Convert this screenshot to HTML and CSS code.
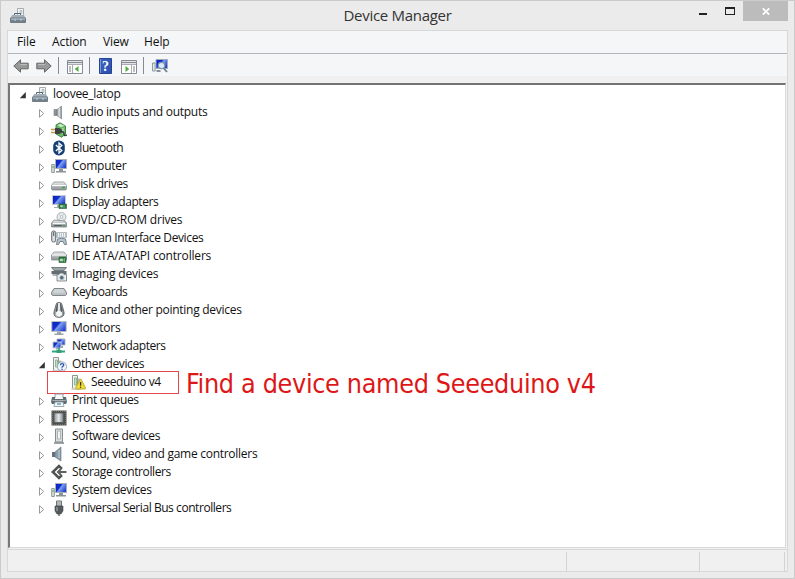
FILE: index.html
```
<!DOCTYPE html>
<html lang="en">
<head>
<meta charset="utf-8">
<title>Device Manager</title>
<link rel="stylesheet" href="styles.css">
</head>
<body>
<svg class="defs" aria-hidden="true">
  <defs>
    <linearGradient id="steel" x2="0" y2="1"><stop stop-color="#eceeee"/><stop offset="1" stop-color="#858b8e"/></linearGradient>
    <linearGradient id="silver"><stop stop-color="#8b9194"/><stop offset=".5" stop-color="#e6eaeb"/><stop offset="1" stop-color="#747b80"/></linearGradient>
    <linearGradient id="screen" x2="1" y2=".6"><stop stop-color="#0a1fb4"/><stop offset=".45" stop-color="#1230cf"/><stop offset=".55" stop-color="#7f9ff0"/><stop offset="1" stop-color="#2443d0"/></linearGradient>
    <linearGradient id="helpblue" x2="1" y2="1"><stop stop-color="#3d62c0"/><stop offset="1" stop-color="#2c4fae"/></linearGradient>
    <symbol id="computer-root" viewBox="0 0 16 16"><path d="M7.500 8V1.500h6V8" fill="#f2f5f6" stroke="#a5adb0"/><path d="M10 3.500h2v3h-2z" fill="#d5dee2" stroke="#9aa8b0" stroke-width=".6"/><path d="M4.500 9V6.500h6V9" fill="none" stroke="#59656e"/><path d="M2 8h12l1.500 3H.5z" fill="#a3afb8"/><path d="M.5 11h15v4.500H.5z" fill="#71808c" stroke="#55616b" stroke-width=".7"/><path d="M1 12h14M5 12v2m6-2v2" stroke="#c7d3db"/></symbol>
    <symbol id="speaker" viewBox="0 0 16 16"><path d="M3 5.500h3v6H3z" fill="#8e9498" stroke="#767b80" stroke-width=".6"/><path d="M6 5.500 10.500 2v13L6 11.500z" fill="url(#silver)" stroke="#6d7479" stroke-width=".5"/></symbol>
    <symbol id="speaker-blue" viewBox="0 0 16 16"><path d="M1 6h3v5H1z" fill="#64727e"/><path d="M4 6 10 1v14l-6-4z" fill="#8b9caa" stroke="#5f6f7d" stroke-width=".6"/><path d="M8 4v8" stroke="#c8d4dc"/></symbol>
    <symbol id="battery" viewBox="0 0 16 16"><path d="M5 3 9 .8 14.500 4v8l-4 3.300L5 12z" fill="#6bb965" stroke="#2d7136" stroke-width=".8"/><path d="m6.500 3 3 2 4-1-4-2z" fill="#d3efcf"/><path d="M12 6v6" stroke="#a5dba0" stroke-width="1.500"/><path d="M0 7.500h5M0 10.500h5" stroke="#bf9b40" stroke-width="1.300"/><path d="M4 6h3q4 0 4 3t-4 3H4z" fill="#3c4143"/><path d="M10 9.500q3 0 3 2.500t3 1" fill="none" stroke="#363c3b" stroke-width="1.400"/></symbol>
    <symbol id="bluetooth" viewBox="0 0 16 16"><rect x="2.200" y=".5" width="11.600" height="15" rx="5.600" fill="#153d75"/><path d="m4.800 5 6 5.600L8 13V3l2.800 2.400-6 5.600" fill="none" stroke="#fff" stroke-width="1.300"/></symbol>
    <symbol id="computer" viewBox="0 0 16 16"><path d="M.7 6.500h2.600v8H.7z" fill="#dce2df" stroke="#8d9a91"/><path d="M1 9h2" stroke="#59a35b"/><path d="M4.500 1.500h11v9h-11z" fill="url(#screen)" stroke="#a7afb9"/><path d="M8 11h4v2H8zM5 13h10v1.500H5z" fill="#8b9298"/></symbol>
    <symbol id="disk" viewBox="0 0 16 16"><path d="m3 6-2.500 3.500V13q0 1 1.500 1h12q1.500 0 1.500-1V9.500L13 6z" fill="url(#steel)" stroke="#8b9092" stroke-width=".8"/><path d="M1 9.500h14" stroke="#fff"/><path d="M11 11.500h3" stroke="#39aa42" stroke-width="1.400"/></symbol>
    <symbol id="display" viewBox="0 0 16 16"><path d="M1.500 1.500h13v9h-13z" fill="url(#screen)" stroke="#c5cbd2"/><path d="M6 11h4v2H6zM3 13h7v1H3z" fill="#a7adb2"/><path d="M8 10h7.500v4.500H8z" fill="#2e7940" stroke="#215b30" stroke-width=".6"/><path d="M9.500 11.500h2v1.500h-2zM13 11v3" fill="#b9dfc0" stroke="#a9d3b1" stroke-width=".6"/></symbol>
    <symbol id="dvd" viewBox="0 0 16 16"><circle cx="10.500" cy="5" r="4.500" fill="#e8edef" stroke="#9aa3a6" stroke-width=".8"/><path d="m8 2 5 6m0-6L8 8" stroke="#b2bcc0" stroke-width=".7"/><circle cx="10.500" cy="5" r="1.300" fill="#fff" stroke="#8e999f" stroke-width=".5"/><path d="m3 8-2.500 3v4h15v-4L14 9z" fill="url(#steel)" stroke="#7e8588" stroke-width=".8"/><path d="M2 11.500h12" stroke="#f7f8f8"/><path d="M3 13.500h8" stroke="#555c5f"/><path d="M12 13.500h2" stroke="#319f3c"/></symbol>
    <symbol id="hid" viewBox="0 0 16 16"><rect x=".7" y="1" width="4" height="11" rx="1.800" fill="#dadfe1" stroke="#62696d"/><path d="M2.700 2v4" stroke="#4d555a"/><path d="M5.500 2.500h10v5h-10z" fill="#eef1f3" stroke="#9aa4aa" stroke-width=".7"/><path d="M6 4h9M6 6h9" stroke="#8e9aa2" stroke-dasharray="1 1"/><path d="m5.500 14.500 1-5.500q4-1.500 8 0l1 5.500h-2l-1.500-3H9l-1.500 3z" fill="#b9c5ce" stroke="#596a78" stroke-width=".8"/></symbol>
    <symbol id="ide" viewBox="0 0 16 16"><path d="M3 4 .5 7v5h15V7L13 4z" fill="url(#steel)" stroke="#898f92" stroke-width=".8"/><path d="M1 7h14" stroke="#fff"/><path d="M8 9h7v5.500H8z" fill="#2f7941" stroke="#235b30" stroke-width=".6"/><path d="M9 11h3v2H9zM13.500 10v4" fill="#bce0c2" stroke="#9bcda4" stroke-width=".6"/></symbol>
    <symbol id="imaging" viewBox="0 0 16 16"><path d="M.5 1.500h15L13 4.500H3z" fill="#9ba6aa" stroke="#515b60" stroke-width=".7"/><path d="M.5 5h15v3H.5z" fill="#636e73"/><path d="M1 8h6v2H2z" fill="#aeb5b7"/><path d="M6 8.500h2l1-1.500h3l1 1.500h2.500v6.500H6z" fill="#eceeee" stroke="#6b7376" stroke-width=".8"/><circle cx="10.800" cy="11.700" r="2.200" fill="#526876" stroke="#bfcdd4"/></symbol>
    <symbol id="keyboard" viewBox="0 0 16 16"><path d="m3 4.500-2.500 4v2l1 1h13l1-1v-2l-2.500-4z" fill="#bcc1c4" stroke="#697074" stroke-width=".8"/><path d="M3.500 6h9M2.500 8h11" stroke="#f6f7f7" stroke-dasharray="1.200 .5"/></symbol>
    <symbol id="mouse" viewBox="0 0 16 16"><path d="M5.500 1.200Q8-.4 10.500 1.200L13 10q1 5-5 5.500Q2 15 3 10z" fill="url(#silver)" stroke="#55595d" stroke-width=".8"/><path d="M6 1.500 4.500 9q1 2 2 0L7 1.500zM10 1.500 11.500 9q-1 2-2 0L9 1.500z" fill="#51565a"/><path d="M8 2v5" stroke="#e8eaeb" stroke-width="1.500"/><ellipse cx="8" cy="11.500" rx="3" ry="2.500" fill="#f5f6f6"/></symbol>
    <symbol id="monitor" viewBox="0 0 16 16"><path d="M.8 1.500h14.400v10H.8z" fill="url(#screen)" stroke="#b8bdc5"/><path d="M6 12h4v2H6zM3.500 13.500h9V15h-9z" fill="#9ba2aa"/></symbol>
    <symbol id="network" viewBox="0 0 16 16"><path d="M6 1h8v6H6z" fill="url(#screen)" stroke="#acb5be"/><path d="M2 4h8v6H2z" fill="url(#screen)" stroke="#bac3ca"/><path d="M5 10h3v1.500H5zM9 8h3v2H9z" fill="#9da9b1"/><path d="M1 13.500h13M8 10v5" stroke="#35a584" stroke-width="1.800"/><path d="M5.500 12h5v3h-5z" fill="#389d70"/></symbol>
    <symbol id="tower" viewBox="0 0 16 16"><path d="M4.500 1h7v13h-7z" fill="#d9dddd" stroke="#858d8f"/><path d="M6.500 3h3v8h-3z" fill="#f4f5f5" stroke="#9ea5a7" stroke-width=".8"/><path d="M3 15h10" stroke="#7e8789" stroke-width="1.500"/></symbol>
    <symbol id="device-card" viewBox="0 0 16 16"><path d="M2.500 14V1.500h5V14" fill="#eef1ee" stroke="#8b9790"/><path d="M4.500 4h2v7h-2z" fill="#c8dec9" stroke="#83ab87" stroke-width=".8"/><path d="M8 5h2v9H8z" fill="#d7dbd9" stroke="#98a09b" stroke-width=".7"/><path d="M1.500 15h9" stroke="#9ba39d"/></symbol>
    <symbol id="unknown" viewBox="0 0 16 16"><use href="#device-card"/><circle cx="11" cy="10.500" r="4.600" fill="#edf4fa" stroke="#8b9bad" stroke-width=".8"/><path d="M9.400 9.300q0-1.600 1.700-1.600t1.700 1.400q0 .8-1 1.300t-.7 1.300" fill="none" stroke="#2355a5" stroke-width="1.200"/><circle cx="11" cy="13.200" r=".75" fill="#2355a5"/></symbol>
    <symbol id="warning" viewBox="0 0 16 16"><use href="#device-card"/><path d="M10 5.500q.6-.8 1.200 0l4.300 8.300q.3 1-.6 1.200H6.200q-.9-.2-.6-1.200z" fill="#f1dc35" stroke="#b29a20" stroke-width=".8"/><path d="M10.600 8v3.700" stroke="#39351c" stroke-width="1.300"/><circle cx="10.600" cy="13.200" r=".7" fill="#39351c"/></symbol>
    <symbol id="printer" viewBox="0 0 16 16"><path d="M4 6V2h8v4" fill="#f8fafb" stroke="#929a9e"/><path d="m1 5-1 5 1 2h14l1-2-1-5h-3v2H4V5z" fill="#606c73"/><path d="M1.500 8.500h13" stroke="#a8b2b6"/><path d="M4 10h8l1 4.500H3z" fill="#f6f8f9" stroke="#8a969c" stroke-width=".8"/><path d="M6 11h4v2H6z" fill="#82b6c2"/></symbol>
    <symbol id="processor" viewBox="0 0 16 16"><path d="M.5.5h15v15H.5z" fill="#4e514c"/><path d="M1 1.500h14M1 14.500h14M1.500 1v14M14.500 1v14" stroke="#77766b" stroke-width="1" stroke-dasharray="1 1"/><path d="M3 3h9.500v9.500H3z" fill="url(#silver)" stroke="#55595a" stroke-width=".8"/></symbol>
    <symbol id="storage" viewBox="0 0 16 16"><path d="M11 4.800 8 2 1.800 8 8 14l3-2.800" fill="none" stroke="#505253" stroke-width="2.500"/><path d="M7 8h8.500M10 5 7 8l3 3" fill="none" stroke="#5d5f60" stroke-width="2"/></symbol>
    <symbol id="usb" viewBox="0 0 16 16"><path d="M5.500 1h5v5h-5z" fill="#d0d4d5" stroke="#6c7375"/><path d="M7 2v3m2-3v3" stroke="#7c8589" stroke-width=".7"/><path d="M4 6h8v5l-2 3H6l-2-3z" fill="#535a5e" stroke="#41484b" stroke-width=".6"/><path d="M6 7v4" stroke="#aeb5b7"/><path d="M8 14v2" stroke="#60686b" stroke-width="1.500"/></symbol>
    <symbol id="scan" viewBox="0 0 16 16"><path d="M.6 5h2.500v8H.6z" fill="#edf1f3" stroke="#889198"/><path d="M4 1.500h11.500v9H4z" fill="url(#screen)" stroke="#9facbb"/><path d="M4.500 13h4" stroke="#84919b" stroke-width="2"/><circle cx="9.500" cy="7.500" r="3.200" fill="#d9eafa" stroke="#8197a7" stroke-width="1.200"/><path d="m11.500 10 3.500 4" stroke="#68818f" stroke-width="1.800"/></symbol>
    <symbol id="closed" viewBox="0 0 8 9"><path d="M1.500.7v7.600L5.700 4.500z" fill="#fff" stroke="#999"/></symbol>
    <symbol id="opened" viewBox="0 0 8 9"><path d="M6.800 1v6.300H.8z" fill="#333"/></symbol>
  </defs>
</svg>
<main class="window">
  <header class="titlebar">
    <svg class="app-icon"><use href="#computer-root"/></svg>
    <h1>Device Manager</h1>
    <div class="controls">
      <svg class="min" viewBox="0 0 8 2"><path d="M0 0h8v2H0z"/></svg>
      <svg class="max" viewBox="0 0 10 8"><path d="M0 0h10v8H0zM1 2v5h8V2z" fill-rule="evenodd"/></svg>
      <span class="close"><svg viewBox="0 0 8 7"><path d="m.8.3 6.400 6.400m0-6.400L.8 6.700"/></svg></span>
    </div>
  </header>
  <div class="client">
    <nav class="menu"><span class="m-file">File</span><span class="m-action">Action</span><span class="m-view">View</span><span>Help</span></nav>
    <div class="toolbar">
      <svg class="nav-arrow" viewBox="0 0 16 14"><path d="M.8 7 7.500.8v3.400h7.700v5.600H7.500v3.400z"/><path class="shine" d="M7 5.500h7"/></svg>
      <svg class="nav-arrow forward" viewBox="0 0 16 14"><path d="M15.200 7 8.500.8v3.400H.8v5.600h7.700v3.400z"/><path class="shine" d="M2 5.500h7"/></svg>
      <i class="sep s1"></i>
      <svg class="pane" viewBox="0 0 16 14"><path d="M.5.500h15v13H.5z" fill="#fff" stroke="#858b91"/><path d="M1 2.500h14" stroke="#848b94" stroke-width="1.500"/><path d="M1 4.500h14M5.500 5v8" stroke="#a7adb3"/><path d="M2 7h2M2 9h2M2 11h2" stroke="#777f86"/><path d="M11.500 6v6L7.700 9z" fill="#50ad3c"/></svg>
      <i class="sep s2"></i>
      <svg class="help" viewBox="0 0 13 16"><path d="M.5.500h12v15H.5z" fill="url(#helpblue)" stroke="#244496"/><path d="M1.500 1v14" stroke="#8198d5"/><text x="3" y="13">?</text></svg>
      <svg class="pane action-pane" viewBox="0 0 16 14"><path d="M.5.500h15v13H.5z" fill="#fff" stroke="#858b91"/><path d="M1 2.500h14" stroke="#848b94" stroke-width="1.500"/><path d="M1 4.500h14M10.500 5v8" stroke="#a7adb3"/><path d="M12 7h2M12 9h2M12 11h2" stroke="#777f86"/><path d="M4.500 6v6l3.800-3z" fill="#50ad3c"/></svg>
      <i class="sep s3"></i>
      <svg class="scan"><use href="#scan"/></svg>
    </div>
    <section class="tree-frame">
      <ul class="tree">
        <li class="root"><svg class="twist"><use href="#opened"/></svg><svg class="icon"><use href="#computer-root"/></svg><span class="snug">loovee_latop</span></li>
        <li><svg class="twist"><use href="#closed"/></svg><svg class="icon"><use href="#speaker"/></svg><span class="snug">Audio inputs and outputs</span></li>
        <li><svg class="twist"><use href="#closed"/></svg><svg class="icon"><use href="#battery"/></svg><span class="tight">Batteries</span></li>
        <li><svg class="twist"><use href="#closed"/></svg><svg class="icon"><use href="#bluetooth"/></svg><span class="tight">Bluetooth</span></li>
        <li><svg class="twist"><use href="#closed"/></svg><svg class="icon"><use href="#computer"/></svg><span class="snug">Computer</span></li>
        <li><svg class="twist"><use href="#closed"/></svg><svg class="icon"><use href="#disk"/></svg><span class="tight">Disk drives</span></li>
        <li><svg class="twist"><use href="#closed"/></svg><svg class="icon"><use href="#display"/></svg><span class="tight">Display adapters</span></li>
        <li><svg class="twist"><use href="#closed"/></svg><svg class="icon"><use href="#dvd"/></svg><span>DVD/CD-ROM drives</span></li>
        <li><svg class="twist"><use href="#closed"/></svg><svg class="icon"><use href="#hid"/></svg><span class="medium">Human Interface Devices</span></li>
        <li><svg class="twist"><use href="#closed"/></svg><svg class="icon"><use href="#ide"/></svg><span>IDE ATA/ATAPI controllers</span></li>
        <li><svg class="twist"><use href="#closed"/></svg><svg class="icon"><use href="#imaging"/></svg><span>Imaging devices</span></li>
        <li><svg class="twist"><use href="#closed"/></svg><svg class="icon"><use href="#keyboard"/></svg><span class="tight">Keyboards</span></li>
        <li><svg class="twist"><use href="#closed"/></svg><svg class="icon"><use href="#mouse"/></svg><span class="snug">Mice and other pointing devices</span></li>
        <li><svg class="twist"><use href="#closed"/></svg><svg class="icon"><use href="#monitor"/></svg><span class="snug">Monitors</span></li>
        <li><svg class="twist"><use href="#closed"/></svg><svg class="icon"><use href="#network"/></svg><span class="tight">Network adapters</span></li>
        <li><svg class="twist"><use href="#opened"/></svg><svg class="icon"><use href="#unknown"/></svg><span class="medium">Other devices</span></li>
        <li class="leaf"><svg class="icon"><use href="#warning"/></svg><span class="tight">Seeeduino v4</span><i class="highlight"></i><strong class="note">Find a device named Seeeduino v4</strong></li>
        <li><svg class="twist"><use href="#closed"/></svg><svg class="icon"><use href="#printer"/></svg><span class="medium">Print queues</span></li>
        <li><svg class="twist"><use href="#closed"/></svg><svg class="icon"><use href="#processor"/></svg><span class="tight">Processors</span></li>
        <li><svg class="twist"><use href="#closed"/></svg><svg class="icon"><use href="#tower"/></svg><span class="medium">Software devices</span></li>
        <li><svg class="twist"><use href="#closed"/></svg><svg class="icon"><use href="#speaker-blue"/></svg><span class="snug">Sound, video and game controllers</span></li>
        <li><svg class="twist"><use href="#closed"/></svg><svg class="icon"><use href="#storage"/></svg><span class="medium">Storage controllers</span></li>
        <li><svg class="twist"><use href="#closed"/></svg><svg class="icon"><use href="#computer"/></svg><span class="medium">System devices</span></li>
        <li><svg class="twist"><use href="#closed"/></svg><svg class="icon"><use href="#usb"/></svg><span class="tight">Universal Serial Bus controllers</span></li>
      </ul>
    </section>
    <footer class="status"><span></span><span></span><span></span></footer>
  </div>
</main>
</body>
</html>
```
FILE: styles.css
```
* { box-sizing: border-box; }
body { margin: 0; font: 12px/18px "Open Sans", "Noto Sans", sans-serif; color: #111; overflow: hidden; }
.defs { position: absolute; width: 0; height: 0; }
svg { display: block; flex: none; }
.window { width: 795px; height: 579px; background: #ebebeb; border: 1px solid #cbcbcb; padding: 0 6px; display: flex; flex-direction: column; }
.titlebar { height: 29px; flex: none; display: grid; grid-template-columns: 120px 1fr 120px; }
.app-icon { width: 16px; height: 16px; margin: 6px 0 0 3px; }
h1 { margin: 4px 0 0; font-size: 15px; line-height: 20px; font-weight: 400; text-align: center; color: #333; letter-spacing: -.3px; }
.controls { display: flex; justify-content: flex-end; }
.min { width: 8px; height: 2px; margin: 12px 18px 0 0; }
.max { width: 10px; height: 8px; margin: 6px 8px 0 0; }
.min, .max { fill: #222; }
.close { width: 45px; height: 20px; background: #bcbcbc; display: grid; place-items: center; }
.close svg { width: 8px; height: 7px; margin-top: 1px; fill: none; stroke: #fff; stroke-width: 1.700; }
.client { height: 542px; border: 1px solid #d8d8d8; background: #f0f0f0; display: flex; flex-direction: column; }
.menu { height: 23px; flex: none; background: #f5f6f7; border-bottom: 1px solid #b2b5b7; padding-left: 9px; display: flex; line-height: 22px; }
.menu span { letter-spacing: -.1px; }
.m-file { width: 35px; }
.m-action { width: 51px; }
.m-view { width: 41px; }
.toolbar { height: 22px; flex: none; background: #f5f6f7; padding: 1px 0 0 5px; display: flex; align-items: center; }
.nav-arrow { width: 16px; height: 14px; margin-top: 1px; fill: #999; stroke: #666; }
.forward { margin-left: 7px; }
.nav-arrow .shine { stroke: #bbb; }
.sep { width: 1px; height: 17px; background: #858b90; }
.s1 { margin: 0 8px 0 6px; }
.s2 { margin: 0 9px 0 6px; }
.s3 { margin: 0 8px 0 6px; }
.pane { width: 16px; height: 14px; margin-top: 3px; }
.help { width: 13px; height: 16px; }
.help text { font: bold 14px "Liberation Serif", serif; fill: #fff; }
.action-pane { margin-left: 9px; }
.scan { width: 16px; height: 16px; }
.tree-frame { height: 465px; margin: 7px 1px 0 0; flex: none; background: #fff; border: 1px solid #dadada; border-top: 2px solid #747474; border-left: 2px solid #777; }
.tree { list-style: none; margin: 0; padding: 0; }
.tree li { position: relative; height: 18px; padding-left: 28px; display: flex; }
.tree .root { padding-left: 9px; }
.tree .leaf { padding-left: 61px; }
.tree span { line-height: 18px; white-space: nowrap; letter-spacing: -.18px; }
.tree .snug { letter-spacing: -.27px; }
.tree .medium { letter-spacing: -.38px; }
.tree .tight { letter-spacing: -.44px; }
.icon { width: 16px; height: 16px; margin: 1px 5px 0 0; }
.leaf .icon { margin: 1px 5px 0 -1px; }
.twist { width: 8px; height: 9px; margin: 6px 5px 0 0; }
.highlight { position: absolute; left: 37px; top: -2px; width: 132px; height: 23px; border: 1px solid #e2474b; }
.note { position: absolute; left: 176px; top: -4px; font: 26.700px/30px "DejaVu Sans Condensed", "DejaVu Sans", sans-serif; letter-spacing: -.33px; white-space: nowrap; color: #dd1717; }
.status { height: 24px; flex: none; margin-top: 1px; border-top: 1px solid #d8d8d8; display: grid; grid-template-columns: 559px 133px 85px; }
.status span { border-right: 1px solid #d3d3d3; margin: 2px 0 1px; }
```
